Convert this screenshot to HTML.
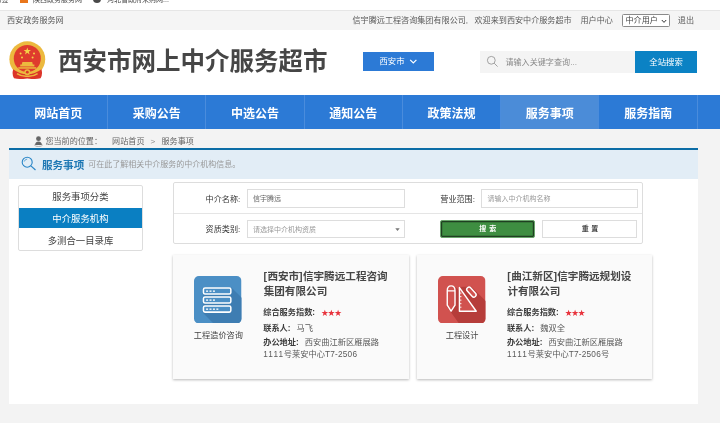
<!DOCTYPE html>
<html lang="zh-CN">
<head>
<meta charset="utf-8">
<title>西安市网上中介服务超市</title>
<style>
*{box-sizing:border-box;margin:0;padding:0}
html,body{width:720px;height:423px;overflow:hidden}
body{background:#f3f3f3;font-family:"Liberation Sans","Noto Sans CJK SC",sans-serif;color:#333;position:relative}
#wrap{position:absolute;left:0;top:0;width:720px;height:423px;will-change:transform}
.abs{position:absolute}
.t{position:absolute;white-space:nowrap;line-height:1}
#chrome{left:0;top:0;width:720px;height:10px;background:#fff;overflow:hidden}
#chrome .t{font-size:7px;color:#444;top:-4px}
#topbar{left:0;top:10px;width:720px;height:20.3px;background:#f5f5f5;border-top:1px solid #e6e6e6}
#topbar .t{font-size:8.1px;color:#5a5a5a;top:5.6px}
#header{left:0;top:30.3px;width:720px;height:65px;background:#fff}
#title{left:58px;top:49.5px;font-size:24.5px;font-weight:700;color:#464646}
#nav{left:0;top:95.3px;width:720px;height:34.2px;background:#2c7ad6}
#nav .it{position:absolute;top:0;height:34.2px;width:98.3px;text-align:center;color:#fff;font-weight:700;font-size:12px;line-height:39.4px;border-right:1px solid #4a8cdc}
#nav .it.on{background:#4b8cd8}
#crumb .t{font-size:8.1px;color:#666;top:138px}
#main{left:9.2px;top:147.6px;width:688.4px;height:256px;background:#fff;border-top:2px solid #0c6da6}
#bar{left:9.2px;top:149.6px;width:688.4px;height:29.4px;background:#e2edf6}
#side{left:18.3px;top:185.3px;width:124.4px;height:65.8px;border:1px solid #ddd;border-radius:2px;background:#fff}
#side div{height:21.5px;line-height:22.6px;text-align:center;font-size:9.4px;color:#444}
#side div.on{height:20.4px;line-height:21.8px;background:#0a7fc2;color:#fff}
#form{left:172.6px;top:182.2px;width:470px;height:62.3px;border:1px solid #ddd;border-radius:2px;background:#fff}
.inp{position:absolute;height:18.5px;border:1px solid #ddd;background:#fff;font-size:7px;color:#999;line-height:17.4px;padding-left:5.4px;white-space:nowrap}
.lbl{position:absolute;font-size:8.1px;color:#333;white-space:nowrap;line-height:1}
.card{position:absolute;top:255px;width:235.8px;height:123.6px;background:#fafafa;box-shadow:0 1px 2.5px rgba(0,0,0,.28)}
.card .nm{position:absolute;left:90.8px;top:14.4px;font-size:10.6px;font-weight:700;color:#464646;line-height:14.4px;white-space:nowrap}
.card .nm i{font-style:normal;padding:0 0.3px;margin-left:-0.4px}
.card .ln{position:absolute;left:90.3px;font-size:8.25px;color:#5a5a5a;white-space:nowrap;line-height:1}
.card .ln b{color:#3c3c3c;font-weight:700;font-size:8.2px}
.card .ln .st{color:#e8323c;font-size:7.2px;letter-spacing:-0.6px;margin-left:6.2px}
.card .ln u{text-decoration:none;letter-spacing:0.22px}
.card .ln u.w{letter-spacing:1.15px}
.card .ln em{font-style:normal;margin-left:3.8px}
.card .cap{position:absolute;left:-4.500px;width:100px;text-align:center;top:77px;font-size:8.2px;color:#444;line-height:1}
.ico{position:absolute;left:21.6px;top:20.8px;width:47.5px;height:47.5px}
#side div.l3{line-height:25.4px}
.card .ln u.w{margin-right:-0.600px}
</style>
</head>
<body>
<div id="wrap">
<div id="chrome" class="abs">
  <span class="t" style="left:-5.500px">书签</span>
  <span class="abs" style="left:19.5px;top:0;width:8.5px;height:3.2px;background:#e9761c"></span>
  <span class="t" style="left:33px">陕西政务服务网</span>
  <span class="abs" style="left:93px;top:-5px;width:8px;height:8px;border-radius:50%;background:#4a4a4a"></span>
  <span class="t" style="left:107px">河北省政府采购网...</span>
</div>
<div id="topbar" class="abs">
  <span class="t" style="left:7px">西安政务服务网</span>
  <span class="t" style="left:352.5px">信宇腾远工程咨询集团有限公司,</span><span class="t" style="left:474.5px">欢迎来到西安中介服务超市</span>
  <span class="t" style="left:580.5px">用户中心</span>
  <span class="abs" style="left:622.3px;top:2.7px;width:47.6px;height:13.6px;border:1px solid #8a8a8a;border-radius:1.5px;background:#fff"></span>
  <span class="t" style="left:625.5px;color:#444">中介用户</span>
  <svg class="abs" style="left:661.3px;top:7.600px" width="6" height="5" viewBox="0 0 6 5"><path d="M0.800 1 L3 3.400 L5.200 1" stroke="#333" stroke-width="1" fill="none"/></svg>
  <span class="t" style="left:677.8px">退出</span>
</div>
<div id="header" class="abs"></div>
<svg class="abs" style="left:9.100px;top:40.700px" width="37" height="38.500" viewBox="0 0 37 38.500">
  <circle cx="18.300" cy="18.200" r="17.900" fill="#ecb93e"/>
  <circle cx="18.300" cy="17.400" r="13.500" fill="#df3b2d"/>
  <path d="M4.200 28.200 Q2.600 33 5 37.300 Q11.500 38.600 18.300 37.600 Q25 38.600 31.600 37.300 Q34 33 32.400 28.200 Q26 33.200 18.300 33.200 Q10.600 33.200 4.200 28.200 Z" fill="#dc3529"/>
  <path d="M8 32.600 Q13 35.800 18.300 35.300 Q23.600 35.800 28.600 32.600" stroke="#ecb93e" stroke-width="1.500" fill="none"/>
  <circle cx="18.300" cy="31.200" r="3" fill="#ecb93e"/>
  <circle cx="18.300" cy="31.200" r="1.400" fill="#dc3529"/>
  <path d="M11.200 25.400 L25.400 25.400 L25.400 23.400 L23.800 23.400 L23.200 21 L13.400 21 L12.800 23.400 L11.200 23.400 Z" fill="#ecb93e"/>
  <rect x="9.300" y="26.200" width="18" height="1.500" fill="#ecb93e"/>
  <polygon points="18.300,6.400 19.200,9 22,9 19.800,10.700 20.600,13.400 18.300,11.800 16,13.400 16.800,10.700 14.600,9 17.400,9" fill="#f5d247"/>
  <circle cx="11.600" cy="12.400" r="1" fill="#f5d247"/><circle cx="13" cy="16.400" r="1" fill="#f5d247"/>
  <circle cx="25" cy="12.400" r="1" fill="#f5d247"/><circle cx="23.600" cy="16.400" r="1" fill="#f5d247"/>
</svg>

<div id="title" class="t">西安市网上中介服务超市</div>

<div class="abs" style="left:362.8px;top:51.9px;width:71px;height:19px;background:#2c7ad6"></div>
<span class="t" style="left:379.5px;top:57.3px;font-size:8.4px;color:#fff">西安市</span>
<svg class="abs" style="left:409px;top:58px" width="9" height="7" viewBox="0 0 9 7"><path d="M1.200 1.800 L4.300 4.900 L7.400 1.800" stroke="#fff" stroke-width="1.200" fill="none"/></svg>

<div class="abs" style="left:480px;top:50.8px;width:155px;height:22.7px;background:#f4f4f4"></div>
<svg class="abs" style="left:486px;top:54.800px" width="13" height="13" viewBox="0 0 13 13"><circle cx="5.300" cy="5.300" r="3.900" stroke="#999" stroke-width="0.900" fill="none"/><path d="M8.200 8.200 L11.600 11.600" stroke="#999" stroke-width="0.900"/></svg>
<span class="t" style="left:505.4px;top:59.1px;font-size:8.1px;color:#8a8a8a">请输入关键字查询...</span>
<div class="abs" style="left:634.7px;top:50.8px;width:62.8px;height:22.7px;background:#0b82c4"></div>
<span class="t" style="left:649.3px;top:58.1px;font-size:8.4px;color:#fff">全站搜索</span>

<div id="nav" class="abs">
  <div class="it" style="left:9.7px">网站首页</div>
  <div class="it" style="left:108px">采购公告</div>
  <div class="it" style="left:206.3px">中选公告</div>
  <div class="it" style="left:304.6px">通知公告</div>
  <div class="it" style="left:402.9px">政策法规</div>
  <div class="it on" style="left:501.2px">服务事项</div>
  <div class="it" style="left:599.5px">服务指南</div>
</div>

<div id="crumb">
  <svg class="abs" style="left:33.6px;top:136.2px" width="9" height="11" viewBox="0 0 9 11"><ellipse cx="4.500" cy="9.100" rx="3.900" ry="1.400" fill="none" stroke="#999" stroke-width="0.700"/><circle cx="4.500" cy="2.700" r="2.400" fill="#666"/><path d="M1.200 9 Q1.200 5.400 4.500 5.400 Q7.800 5.400 7.800 9 Z" fill="#666"/></svg>
  <span class="t" style="left:45.4px">您当前的位置：</span>
  <span class="t" style="left:112.1px">网站首页</span>
  <span class="t" style="left:150.5px;color:#888">&gt;</span>
  <span class="t" style="left:161.5px">服务事项</span>
</div>

<div id="main" class="abs"></div>
<div id="bar" class="abs"></div>
<svg class="abs" style="left:20.500px;top:155.800px" width="16" height="16" viewBox="0 0 16 16"><circle cx="6.200" cy="6.200" r="5" stroke="#2a86c7" stroke-width="1.100" fill="none"/><path d="M9.900 9.900 L14.500 14" stroke="#2a86c7" stroke-width="1.200"/><path d="M3.200 5.600 Q3.800 3.300 6.200 3.100" stroke="#2a86c7" stroke-width="0.700" fill="none"/></svg>
<span class="t" style="left:41.9px;top:159.6px;font-size:10.6px;font-weight:700;color:#1e78b4">服务事项</span>
<span class="t" style="left:88.3px;top:161.4px;font-size:8px;color:#999">可在此了解相关中介服务的中介机构信息。</span>

<div id="side" class="abs">
  <div>服务事项分类</div>
  <div class="on">中介服务机构</div>
  <div class="l3">多测合一目录库</div>
</div>

<div id="form" class="abs">
  <div class="abs" style="left:0;top:29.500px;width:468px;height:1px;background:#e5e5e5"></div>
</div>
<span class="lbl" style="left:205.6px;top:195.9px">中介名称:</span>
<div class="inp" style="left:246.6px;top:189.1px;width:158px;color:#666">信宇腾远</div>
<span class="lbl" style="left:440.3px;top:195.9px">营业范围:</span>
<div class="inp" style="left:481px;top:189.1px;width:157.3px">请输入中介机构名称</div>
<span class="lbl" style="left:205.6px;top:225.5px">资质类别:</span>
<div class="inp" style="left:246.6px;top:219.6px;width:158px">请选择中介机构资质</div>
<svg class="abs" style="left:394.5px;top:227.500px" width="5" height="4" viewBox="0 0 5 4"><path d="M0.300 0.300 L4.700 0.300 L2.500 3 Z" fill="#777"/></svg>
<div class="abs" style="left:440px;top:219.5px;width:95.3px;height:18.4px;background:#3e8e41;border:1px solid #6aa56c;border-radius:2px;box-shadow:inset 0 0 0 1.200px #1f3f21"></div>
<span class="t" style="left:479.3px;top:225.3px;font-size:7px;font-weight:700;color:#fff">搜<span style="margin-left:3px">索</span></span>
<div class="abs" style="left:542.4px;top:219.5px;width:94.2px;height:18.4px;background:#fff;border:1px solid #ddd"></div>
<span class="t" style="left:581.8px;top:225.3px;font-size:7px;font-weight:700;color:#444">重<span style="margin-left:2.500px">置</span></span>

<div class="card" style="left:172.9px">
  <svg class="ico" viewBox="0 0 47.200 47.200">
  <defs><clipPath id="c1"><rect width="47.200" height="47.200" rx="4.800"/></clipPath></defs>
  <g clip-path="url(#c1)">
    <rect width="47.200" height="47.200" fill="#4b8fc5"/>
    <polygon points="37.200,11.400 60,34.200 60,60 32,60 8.800,36.500 8.800,11.400" fill="#3e7db2"/>
    <g fill="#4b8fc5" stroke="#fff" stroke-width="1.500">
      <rect x="9.400" y="12" width="27.200" height="6" rx="1.500"/>
      <rect x="9.400" y="20.900" width="27.200" height="6" rx="1.500"/>
      <rect x="9.400" y="29.900" width="27.200" height="6" rx="1.500"/>
    </g>
    <g fill="#fff">
      <rect x="12" y="14.400" width="2" height="1.300"/><rect x="15.400" y="14.400" width="2" height="1.300"/><rect x="18.800" y="14.400" width="2" height="1.300"/>
      <rect x="12" y="23.300" width="2" height="1.300"/><rect x="15.400" y="23.300" width="2" height="1.300"/><rect x="18.800" y="23.300" width="2" height="1.300"/>
      <rect x="12" y="32.300" width="2" height="1.300"/><rect x="15.400" y="32.300" width="2" height="1.300"/><rect x="18.800" y="32.300" width="2" height="1.300"/><rect x="22.200" y="32.300" width="2" height="1.300"/>
    </g>
  </g>
</svg>

  <div class="cap">工程造价咨询</div>
  <div class="nm"><i>[</i>西安市<i>]</i>信宇腾远工程咨询<br>集团有限公司</div>
  <div class="ln" style="top:54.3px"><b>综合服务指数:</b><span class="st">★★★</span></div>
  <div class="ln" style="top:69.7px"><b>联系人:</b> <em>马飞</em></div>
  <div class="ln" style="top:84.3px"><b>办公地址:</b> <em>西安曲江新区雁展路</em></div>
  <div class="ln" style="top:95.6px"><u class="w">1111</u>号莱安中心<u>T7-2506</u></div>
</div>
<div class="card" style="left:416.6px">
  <svg class="ico" viewBox="0 0 47.200 47.200">
  <defs><clipPath id="c2"><rect width="47.200" height="47.200" rx="4.800"/></clipPath></defs>
  <g clip-path="url(#c2)">
    <rect width="47.200" height="47.200" fill="#d1524f"/>
    <polygon points="17.600,11 24,17.400 21,11 33,10.500 60,37.500 60,60 30,60 12.500,35.500 8.500,30" fill="#b63d3a"/>
    <g fill="none" stroke="#fff" stroke-width="1.400" stroke-linejoin="round">
      <path d="M9.200 14.600 Q9.200 9.800 13 9.800 Q16.900 9.800 16.900 14.600 L16.900 29 L13 35 L9.200 29 Z" fill="#d1524f"/>
      <path d="M9.200 14.800 L16.900 14.800"/>
      <path d="M21.300 11.500 L21.300 35 L38 35 Z" fill="#d1524f"/>
      <rect x="-2.300" y="-5.800" width="4.600" height="11.600" rx="2.300" transform="translate(33.200 16) rotate(-42)" fill="#d1524f"/>
    </g>
    <g stroke="#fff" stroke-width="0.900"><path d="M21.300 17 L23.300 17 M21.300 20.500 L23.300 20.500 M21.300 24 L23.300 24 M21.300 27.500 L23.300 27.500 M21.300 31 L23.300 31"/></g>
  </g>
</svg>

  <div class="cap">工程设计</div>
  <div class="nm"><i>[</i>曲江新区<i>]</i>信宇腾远规划设<br>计有限公司</div>
  <div class="ln" style="top:54.3px"><b>综合服务指数:</b><span class="st">★★★</span></div>
  <div class="ln" style="top:69.7px"><b>联系人:</b> <em>魏双全</em></div>
  <div class="ln" style="top:84.3px"><b>办公地址:</b> <em>西安曲江新区雁展路</em></div>
  <div class="ln" style="top:95.6px"><u class="w">1111</u>号莱安中心<u>T7-2506</u>号</div>
</div>
</div><!--wrap-->
</body>
</html>
